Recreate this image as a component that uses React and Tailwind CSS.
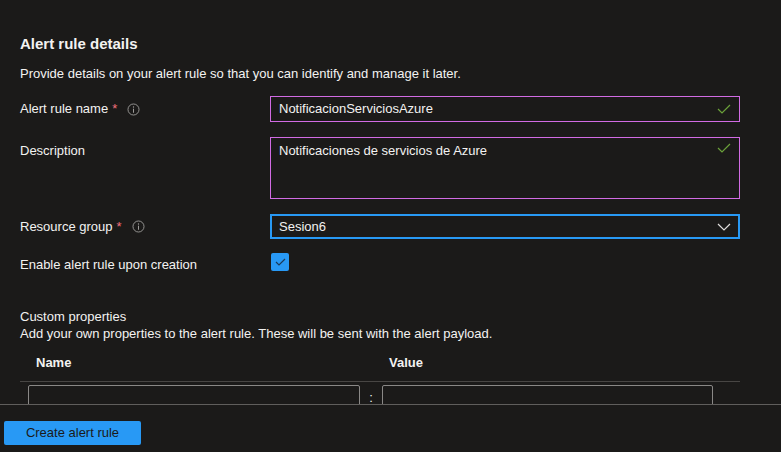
import React from "react";

const font = { fontFamily: "'Liberation Sans', 'Noto Sans', sans-serif" };

function InfoIcon() {
  return (
    <svg width="13" height="13" viewBox="0 0 16 16" className="ml-[10px]">
      <circle cx="8" cy="8" r="6.8" fill="none" stroke="#a19f9d" strokeWidth="1.1" />
      <circle cx="8" cy="4.9" r="0.8" fill="#a19f9d" />
      <path d="M8 7v5" stroke="#a19f9d" strokeWidth="1.2" />
    </svg>
  );
}

function Check({ color = "#6ba13a" }) {
  return (
    <svg width="14" height="10" viewBox="0 0 14 10">
      <path d="M1 5l4 4 8-8" fill="none" stroke={color} strokeWidth="1.2" />
    </svg>
  );
}

function Label({ children, required, info }) {
  return (
    <div className="flex items-center text-[13px] text-[#f3f2f1] w-[250px] shrink-0">
      <span>{children}</span>
      {required && <span className="ml-[4px] text-[#f1707b]">*</span>}
      {info && <InfoIcon />}
    </div>
  );
}

export default function App() {
  return (
    <div className="h-[452px] w-[781px] bg-[#1b1a19] flex flex-col text-[#f3f2f1] overflow-hidden" style={font}>
      <div className="flex-1 overflow-hidden px-5 pt-[34px]">
        <h2 className="text-[15px] font-bold leading-5">Alert rule details</h2>
        <p className="text-[13px] mt-[11px] leading-[18px]">
          Provide details on your alert rule so that you can identify and manage it later.
        </p>

        <div className="flex items-center mt-[13px]">
          <Label required info>Alert rule name</Label>
          <div className="w-[470px] h-[26px] border border-[#d16be3] flex items-center justify-between pl-[8px] pr-[8px] text-[13px]">
            <span>NotificacionServiciosAzure</span>
            <Check />
          </div>
        </div>

        <div className="flex items-start mt-[15px]">
          <div className="pt-[4px]"><Label>Description</Label></div>
          <div className="w-[470px] h-[62px] border border-[#d16be3] flex items-start justify-between pl-[8px] pr-[8px] pt-[3px] text-[13px]">
            <span>Notificaciones de servicios de Azure</span>
            <div className="pt-[2px]"><Check /></div>
          </div>
        </div>

        <div className="flex items-center mt-[15px]">
          <Label required info>Resource group</Label>
          <div className="w-[470px] h-[25px] border-2 border-[#2899f5] flex items-center justify-between pl-[7px] pr-[7px] text-[13px]">
            <span>Sesion6</span>
            <svg width="14" height="8" viewBox="0 0 14 8">
              <path d="M1 1l6 6 6-6" fill="none" stroke="#e1dfdd" strokeWidth="1.2" />
            </svg>
          </div>
        </div>

        <div className="flex items-start mt-[14px]">
          <div className="pt-[2px]"><Label>Enable alert rule upon creation</Label></div>
          <div className="ml-[1px] w-[18px] h-[18px] rounded-[2px] bg-[#2899f5] flex items-center justify-center">
            <svg width="11" height="8" viewBox="0 0 11 8">
              <path d="M1 4l3 3 6-6" fill="none" stroke="#1b3a5a" strokeWidth="1.2" />
            </svg>
          </div>
        </div>

        <div className="mt-[33px] text-[13px] leading-[17px]">Custom properties</div>
        <div className="text-[13px] leading-[17px]">
          Add your own properties to the alert rule. These will be sent with the alert payload.
        </div>

        <div className="w-[720px] mt-[4px] border-b border-[#484644] flex h-[36px] items-center text-[13px] font-bold">
          <div className="pl-4 w-[369px]">Name</div>
          <div>Value</div>
        </div>
        <div className="flex items-start pt-[3px] pl-[8px]">
          <div className="w-[332px] h-[30px] border border-[#8a8886] rounded-[2px]" />
          <div className="w-[22px] text-center text-[13px] leading-4 pt-[5px]">:</div>
          <div className="w-[331px] h-[30px] border border-[#8a8886] rounded-[2px]" />
        </div>
      </div>

      <div className="h-[48px] shrink-0 border-t border-[#605e5c] px-[4px] pt-[16px]">
        <button className="h-[24px] w-[137px] bg-[#2899f5] rounded-[2px] text-[13px] text-[#1b1a19] flex items-center justify-center">
          Create alert rule
        </button>
      </div>
    </div>
  );
}
